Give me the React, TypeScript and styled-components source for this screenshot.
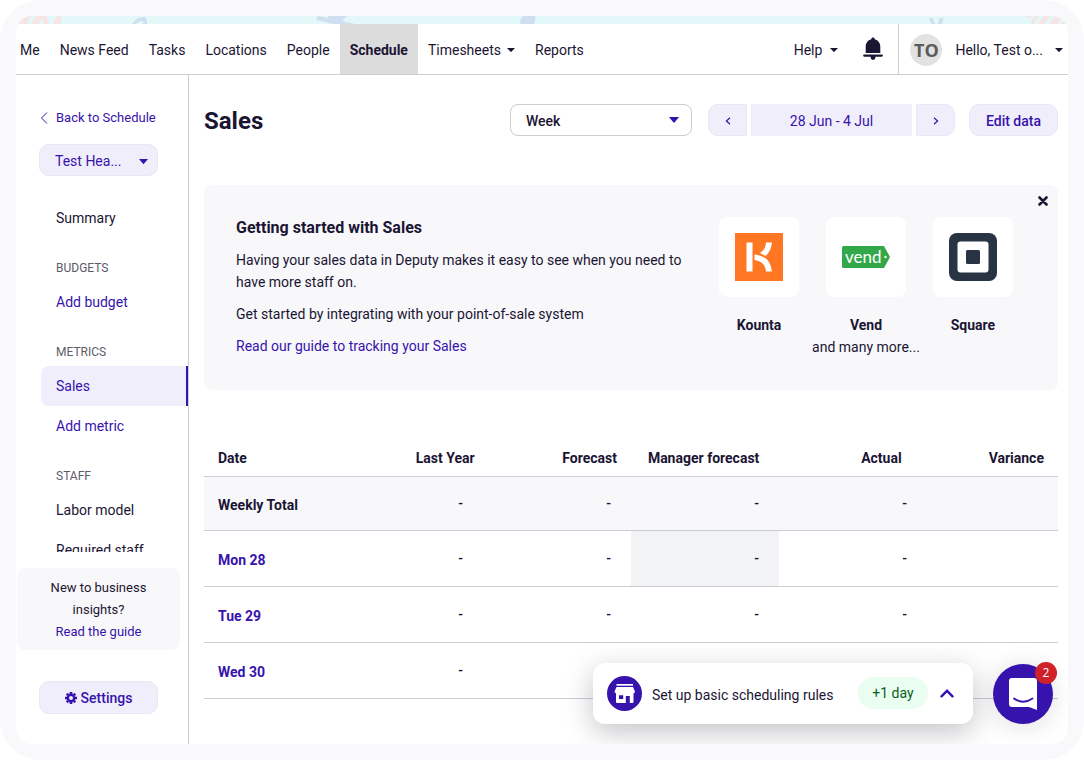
import React from 'react';
import styled, { createGlobalStyle, css } from 'styled-components';

const ink = '#1b1534';
const purple = '#3713ad';
const lilac = '#f0eefa';
const mist = '#f8f8fa';
const line = '#cccdd5';

const GlobalStyle = createGlobalStyle`
  *, *::before, *::after { box-sizing: border-box; }
  body { margin: 0; background: #fff; color: ${ink}; font: 14px/22px Roboto, "Liberation Sans", sans-serif; }
  button, select { font: inherit; color: inherit; margin: 0; }
  button { cursor: pointer; padding: 0; border: 0; background: none; }
  a { color: ${purple}; text-decoration: none; }
  h1, h2, h3, p, ul { margin: 0; padding: 0; }
  ul { list-style: none; }
  svg { display: block; flex: none; }
`;

const Frame = styled.div`
  height: 100vh;
  padding: 16px;
  border-radius: 40px;
  background: #f9f9fb;
`;
const Shell = styled.div`
  position: relative;
  height: 100%;
  display: flex;
  flex-direction: column;
  overflow: hidden;
  border-radius: 16px;
  background: #fff;
`;
const Strip = styled.div`
  flex: none;
  height: 8px;
  background: #e3f8f8;
`;
const TopBar = styled.header`
  flex: none;
  display: flex;
  justify-content: space-between;
  height: 51px;
  border-bottom: 1px solid ${line};
`;
const NavGroup = styled.nav`
  display: flex;
  margin-left: -6px;
`;
const NavLink = styled.a<{ $active?: boolean }>`
  display: flex;
  align-items: center;
  gap: 6px;
  padding: 2px 10px 0;
  color: ${ink};
  white-space: nowrap;
  ${p => p.$active && css`background: #dcdcdc; font-weight: 700;`}
`;
const UserGroup = styled.div`
  display: flex;
  align-items: stretch;
`;
const BarButton = styled.button`
  display: flex;
  align-items: center;
  gap: 8px;
  padding-top: 2px;
  white-space: nowrap;
`;
const BellButton = styled(BarButton)`
  padding: 0 15px 0 25px;
`;
const UserButton = styled(BarButton)`
  padding: 2px 5px 0 11px;
  gap: 13px;
  border-left: 1px solid ${line};
`;
const UserName = styled.span`
  margin-right: -1px;
`;
const Avatar = styled.span`
  display: grid;
  place-items: center;
  width: 32px;
  height: 32px;
  border-radius: 50%;
  background: #e2e2e2;
  color: #5b5b5b;
  font: 700 18px/32px "Open Sans", sans-serif;
`;

const Body = styled.div`
  flex: 1;
  min-height: 0;
  display: flex;
`;
const Sidebar = styled.aside`
  flex: none;
  width: 173px;
  display: flex;
  flex-direction: column;
  align-items: flex-start;
  border-right: 1px solid ${line};
`;
const BackLink = styled.a`
  display: flex;
  align-items: center;
  gap: 8px;
  margin: 32px 0 15px 24px;
  font-size: 13px;
`;
const SoftButton = styled.button`
  display: flex;
  align-items: center;
  justify-content: center;
  height: 32px;
  padding-top: 2px;
  border: 1px solid #e9e6f6;
  border-radius: 10px;
  background: ${lilac};
  color: ${purple};
  font-weight: 500;
  white-space: nowrap;
`;
const LocationButton = styled(SoftButton)`
  width: 119px;
  margin-left: 23px;
  padding: 2px 9px 0 15px;
  justify-content: space-between;
  font-weight: 400;
`;
const Menu = styled.nav`
  flex: 1;
  min-height: 0;
  align-self: stretch;
  margin-top: 22px;
  padding-left: 25px;
  overflow: hidden;
`;
const MenuHeading = styled.h3`
  margin: 20px 0 4px;
  padding-left: 15px;
  color: #5c5b68;
  font-size: 12px;
  font-weight: 400;
  line-height: 20px;
  text-transform: uppercase;
`;
const MenuLink = styled.a<{ $dark?: boolean; $active?: boolean }>`
  display: block;
  padding-left: 15px;
  line-height: 40px;
  color: ${p => (p.$dark ? ink : purple)};
  ${p => p.$active && css`
    border-radius: 8px 0 0 8px;
    border-right: 2px solid ${purple};
    background: ${lilac};
  `}
`;
const HelpBox = styled.div`
  flex: none;
  align-self: stretch;
  margin: 16px 8px 31px 1px;
  padding: 9px 24px 7px;
  border-radius: 8px;
  background: ${mist};
  font-size: 13px;
  text-align: center;
`;
const SettingsButton = styled(SoftButton)`
  flex: none;
  width: 119px;
  height: 33px;
  margin: 0 0 30px 23px;
  padding-top: 0;
  gap: 4px;
`;

const Main = styled.main`
  flex: 1;
  min-width: 0;
  padding: 29px 10px 0 15px;
`;
const TitleRow = styled.div`
  display: flex;
  align-items: center;
  height: 32px;
  margin-bottom: 49px;
`;
const Title = styled.h1`
  flex: 1;
  padding-top: 2px;
  font-size: 24px;
  line-height: 32px;
`;
const PeriodField = styled.label`
  position: relative;
  margin-right: 16px;
`;
const PeriodSelect = styled.select`
  appearance: none;
  display: block;
  width: 182px;
  height: 32px;
  padding: 2px 15px 0;
  border: 1px solid ${line};
  border-radius: 8px;
  background: #fff;
  font-weight: 500;
`;
const FieldCaret = styled.span`
  position: absolute;
  right: 13px;
  top: 13px;
  pointer-events: none;
`;
const Stepper = styled.div`
  display: flex;
  gap: 4px;
  margin-right: 14px;
`;
const StepButton = styled(SoftButton)<{ $side: 'left' | 'right' }>`
  width: 39px;
  border-radius: ${p => (p.$side === 'left' ? '10px 0 0 10px' : '0 10px 10px 0')};
`;
const RangeButton = styled(SoftButton)`
  width: 161px;
  border-radius: 0;
  border-color: ${lilac};
  font-weight: 400;
`;
const EditButton = styled(SoftButton)`
  width: 89px;
`;

const Intro = styled.section`
  position: relative;
  display: flex;
  justify-content: space-between;
  padding: 32px;
  border-radius: 8px;
  background: ${mist};
`;
const IntroText = styled.div`
  display: flex;
  flex-direction: column;
  gap: 10px;
  width: 455px;
`;
const IntroTitle = styled.h2`
  font-size: 16px;
  line-height: 22px;
`;
const CloseButton = styled.button`
  position: absolute;
  top: 11px;
  right: 10px;
`;
const Partners = styled.ul`
  display: grid;
  grid-template-columns: repeat(3, 1fr);
  width: 320px;
  text-align: center;
`;
const Partner = styled.li`
  display: flex;
  flex-direction: column;
  align-items: center;
  font-weight: 700;
`;
const Tile = styled.span`
  display: grid;
  place-items: center;
  width: 80px;
  height: 80px;
  margin-bottom: 17px;
  border-radius: 8px;
  background: #fff;
`;
const More = styled.span`
  font-weight: 400;
  white-space: nowrap;
`;

const SalesTable = styled.table`
  display: block;
  margin-top: 50px;
  thead, tbody { display: block; }
`;
const HeadRow = styled.tr`
  display: grid;
  grid-template-columns: repeat(6, 1fr);
  height: 37px;
  border-bottom: 1px solid ${line};
`;
const HeadCell = styled.th`
  padding: 7px 14px;
  text-align: right;
  white-space: nowrap;
  &:first-child { text-align: left; }
`;
const Row = styled.tr<{ $total?: boolean }>`
  display: grid;
  grid-template-columns: 131fr repeat(4, 148fr) 131fr;
  height: ${p => (p.$total ? 54 : 56)}px;
  border-bottom: 1px solid ${line};
  background: ${p => (p.$total ? mist : '#fff')};
`;
const RowHead = styled.th`
  display: flex;
  align-items: center;
  padding: 2px 14px 0;
  text-align: left;
`;
const Cell = styled.td<{ $shade?: boolean }>`
  display: flex;
  align-items: center;
  justify-content: flex-end;
  padding: 0 20px 2px 0;
  background: ${p => (p.$shade ? '#f1f3f5' : 'transparent')};
  font-weight: 500;
`;

const Toast = styled.div`
  position: absolute;
  right: 95px;
  bottom: 20px;
  display: flex;
  align-items: center;
  width: 380px;
  height: 61px;
  padding: 0 19px 0 14px;
  border-radius: 12px;
  background: #fff;
  box-shadow: 0 8px 28px rgba(20, 20, 40, 0.25);
`;
const ToastText = styled.span`
  flex: 1;
  padding: 3px 0 0 10px;
  white-space: nowrap;
`;
const Pill = styled.span`
  width: 70px;
  margin: 0 12px 2px 0;
  border-radius: 16px;
  background: #e9fdf1;
  color: #07611c;
  line-height: 32px;
  text-align: center;
`;
const ChatButton = styled.button`
  position: absolute;
  right: 15px;
  bottom: 20px;
  display: grid;
  place-items: center;
  width: 60px;
  height: 60px;
  border-radius: 50%;
  background: ${purple};
  box-shadow: 0 2px 24px rgba(20, 20, 40, 0.14);
`;
const Badge = styled.span`
  position: absolute;
  top: -2px;
  right: -4px;
  width: 22px;
  height: 22px;
  border-radius: 50%;
  background: #d0202a;
  color: #fff;
  font: 12px/21px "Open Sans", sans-serif;
  text-align: center;
`;

const Caret = ({ w = 8, h = 4 }: { w?: number; h?: number }) => (
  <svg width={w} height={h} viewBox="0 0 8 4" preserveAspectRatio="none"><path d="M0 0h8L4.4 3.8q-.4.3-.8 0z" fill="currentColor" /></svg>
);
const Chevron = ({ flip }: { flip?: boolean }) => (
  <svg width="6" height="8" viewBox="0 0 6 8" fill="none" stroke={purple} strokeWidth="1.2"><path d={flip ? 'M1 .8 4.6 4 1 7.2' : 'M5 .8 1.4 4 5 7.2'} /></svg>
);

const StripArt = () => (
  <svg width="100%" height="8" viewBox="0 0 1052 8" preserveAspectRatio="none">
    <g fill="#f7e5e5">
      <path d="M2 8C5 3 9 0 12 0h4q-3 2-5 8zM15 8q2-5 5-8h10q4 2 2 8h-5q1-3 0-5-3 1-4 5zM37 8q1-6 5-8h3q2 3-1 8z" />
      <path d="M309 0h6q0 2-3 2zM315 8q0-4 3-7l5-1-5 8zM322 8l6-8h6l-6 8zM333 8l6-8h4l3 2-5 6zM345 8l4-5 3 3-1 2z" transform="translate(700 0)" />
    </g>
    <g fill="#d0dff0">
      <path d="M116 8q4-7 11-7 5 0 4 7h-4q1-3-1-3-3 0-6 3zM302 0l10 2V0h19l-5 5 13 3h-22l-16-4q-2-2 1-4zM504 8q0-5 3-8h12q1 4-1 8zM913 2q3-1 4 1l2 5h-3q-3-3-3-6zM922 8l1-5q2-2 4-1 1 3-1 6z" />
    </g>
  </svg>
);

const BellIcon = () => (
  <svg width="20" height="24" viewBox="0 0 20 24" fill={ink}>
    <path d="M10 .5c1 0 1.700.7 1.700 1.700C15.200 3 17.300 6 17.300 9.500V16H2.700V9.500C2.700 6 4.800 3 8.300 2.200 8.300 1.200 9 .5 10 .5z" />
    <path d="M1.200 17.500h17.600a1 1 0 0 1 0 2.200H12.300a2.400 2.400 0 0 1-4.600 0H1.200a1 1 0 0 1 0-2.200z" />
    <path d="M7.600 19h4.800v1.600a2.400 2.400 0 0 1-4.800 0z" />
  </svg>
);
const GearIcon = () => (
  <svg width="12" height="12" viewBox="0 0 12 12" fill="none" stroke={purple}>
    <circle cx="6" cy="6" r="3.200" strokeWidth="2.400" />
    <path d="M6 0v2M6 10v2M0 6h2M10 6h2M1.760 1.760l1.400 1.400M8.840 8.840l1.400 1.400M1.760 10.240l1.400-1.400M8.840 3.160l1.400-1.400" strokeWidth="2.600" />
  </svg>
);
const CloseIcon = () => (
  <svg width="10" height="10" viewBox="0 0 10 10" stroke={ink} strokeWidth="2.600" strokeLinecap="round"><path d="m1.500 1.500 7 7M8.500 1.500l-7 7" /></svg>
);
const KountaLogo = () => (
  <svg width="48" height="48" viewBox="0 0 48 48">
    <path d="M0 0h48v48H0z" fill="#ff7722" />
    <path d="M11.500 9.500h6v29h-6zM31 9.500h6q-1 9-6.500 13.500L25 20q5.500-3.500 6-10.500zM19.500 21.500Q35.500 23 37 38.500h-6q-1-10-11.500-11.500z" fill="#fff" />
  </svg>
);
const VendLogo = () => (
  <svg width="48" height="22" viewBox="0 0 48 22">
    <path d="M1.500 0H42l6 11-6 11H1.500Q0 22 0 20.500v-19Q0 0 1.500 0z" fill="#33a84a" />
    <circle cx="43.500" cy="11" r="1.200" fill="#fff" />
    <text x="3" y="17" fill="#fff" fontFamily="Lato, sans-serif" fontSize="17" fontWeight="400">vend</text>
  </svg>
);
const SquareLogo = () => (
  <svg width="48" height="48" viewBox="0 0 48 48">
    <rect width="48" height="48" rx="8" fill="#283343" />
    <rect x="8.500" y="8.500" width="31" height="31" rx="3" fill="#fff" />
    <rect x="17" y="17" width="14" height="14" rx="1.500" fill="#283343" />
  </svg>
);
const StoreIcon = () => (
  <svg width="35" height="35" viewBox="0 0 35 35">
    <circle cx="17.500" cy="17.500" r="17.500" fill={purple} />
    <path d="M9.500 8H26v1.700H9.500z" fill="#fff" />
    <path d="M9.500 11H26l2 4.500q0 1.500-1.500 1.700V26q0 1-1 1H22.800v-7h-4v7H10q-1 0-1-1v-8.800q-1.500-.2-1.500-1.700zM12 19.200V23h4.200v-3.800z" fill="#fff" fillRule="evenodd" />
  </svg>
);
const ChatIcon = () => (
  <svg width="28" height="32" viewBox="0 0 28 32">
    <path d="M3 0h22q3 0 3 3v29l-8-3H3q-3 0-3-3V3q0-3 3-3z" fill="#fff" />
    <path d="M5 20.500q9 6.500 18.500 0" fill="none" stroke={purple} strokeWidth="1.800" strokeLinecap="round" />
  </svg>
);

const navItems = ['Me', 'News Feed', 'Tasks', 'Locations', 'People', 'Schedule', 'Timesheets', 'Reports'];
const columns = ['Date', 'Last Year', 'Forecast', 'Manager forecast', 'Actual', 'Variance'];
const rows = ['Weekly Total', 'Mon 28', 'Tue 29', 'Wed 30'];
const partners = [
  { name: 'Kounta', logo: <KountaLogo /> },
  { name: 'Vend', logo: <VendLogo />, more: 'and many more...' },
  { name: 'Square', logo: <SquareLogo /> },
];

export default function App() {
  return (
    <Frame>
      <GlobalStyle />
      <Shell>
        <Strip><StripArt /></Strip>
        <TopBar>
          <NavGroup>
            {navItems.map(item => (
              <NavLink key={item} href="#" $active={item === 'Schedule'}>
                {item}
                {item === 'Timesheets' && <Caret />}
              </NavLink>
            ))}
          </NavGroup>
          <UserGroup>
            <BarButton>Help <Caret /></BarButton>
            <BellButton aria-label="Notifications"><BellIcon /></BellButton>
            <UserButton><Avatar>TO</Avatar><UserName>Hello, Test o...</UserName> <Caret /></UserButton>
          </UserGroup>
        </TopBar>
        <Body>
          <Sidebar>
            <BackLink href="#">
              <svg width="8" height="12" viewBox="0 0 8 12" fill="none" stroke={purple}><path d="M7 .5 1.500 6 7 11.500" /></svg>
              Back to Schedule
            </BackLink>
            <LocationButton>Test Hea... <Caret w={9} h={5} /></LocationButton>
            <Menu>
              <MenuLink href="#" $dark>Summary</MenuLink>
              <MenuHeading>Budgets</MenuHeading>
              <MenuLink href="#">Add budget</MenuLink>
              <MenuHeading>Metrics</MenuHeading>
              <MenuLink href="#" $active>Sales</MenuLink>
              <MenuLink href="#">Add metric</MenuLink>
              <MenuHeading>Staff</MenuHeading>
              <MenuLink href="#" $dark>Labor model</MenuLink>
              <MenuLink href="#" $dark>Required staff</MenuLink>
            </Menu>
            <HelpBox>
              <p>New to business insights?</p>
              <a href="#">Read the guide</a>
            </HelpBox>
            <SettingsButton><GearIcon />Settings</SettingsButton>
          </Sidebar>
          <Main>
            <TitleRow>
              <Title>Sales</Title>
              <PeriodField>
                <PeriodSelect aria-label="Period" defaultValue="Week"><option>Week</option></PeriodSelect>
                <FieldCaret><svg width="10" height="6" viewBox="0 0 10 6"><path d="M0 0h10L5.500 5.500h-1z" fill={purple} /></svg></FieldCaret>
              </PeriodField>
              <Stepper>
                <StepButton $side="left" aria-label="Previous week"><Chevron /></StepButton>
                <RangeButton>28 Jun - 4 Jul</RangeButton>
                <StepButton $side="right" aria-label="Next week"><Chevron flip /></StepButton>
              </Stepper>
              <EditButton>Edit data</EditButton>
            </TitleRow>
            <Intro>
              <IntroText>
                <IntroTitle>Getting started with Sales</IntroTitle>
                <p>Having your sales data in Deputy makes it easy to see when you need to have more staff on.</p>
                <p>Get started by integrating with your point-of-sale system</p>
                <a href="#">Read our guide to tracking your Sales</a>
              </IntroText>
              <Partners>
                {partners.map(p => (
                  <Partner key={p.name}>
                    <Tile>{p.logo}</Tile>
                    {p.name}
                    {p.more && <More>{p.more}</More>}
                  </Partner>
                ))}
              </Partners>
              <CloseButton aria-label="Close"><CloseIcon /></CloseButton>
            </Intro>
            <SalesTable>
              <thead>
                <HeadRow>{columns.map(c => <HeadCell key={c} scope="col">{c}</HeadCell>)}</HeadRow>
              </thead>
              <tbody>
                {rows.map((label, i) => (
                  <Row key={label} $total={i === 0}>
                    <RowHead scope="row">{i === 0 ? label : <a href="#">{label}</a>}</RowHead>
                    {columns.slice(1, 5).map(c => (
                      <Cell key={c} $shade={i === 1 && c === 'Manager forecast'}>-</Cell>
                    ))}
                    <Cell />
                  </Row>
                ))}
              </tbody>
            </SalesTable>
          </Main>
        </Body>
        <Toast>
          <StoreIcon />
          <ToastText>Set up basic scheduling rules</ToastText>
          <Pill>+1 day</Pill>
          <button aria-label="Expand">
            <svg width="14" height="9" viewBox="0 0 14 9" fill="none" stroke={purple} strokeWidth="2.400" strokeLinecap="round"><path d="m1.500 7.300 5.500-5.500 5.500 5.500" /></svg>
          </button>
        </Toast>
        <ChatButton aria-label="Open chat"><ChatIcon /><Badge>2</Badge></ChatButton>
      </Shell>
    </Frame>
  );
}
